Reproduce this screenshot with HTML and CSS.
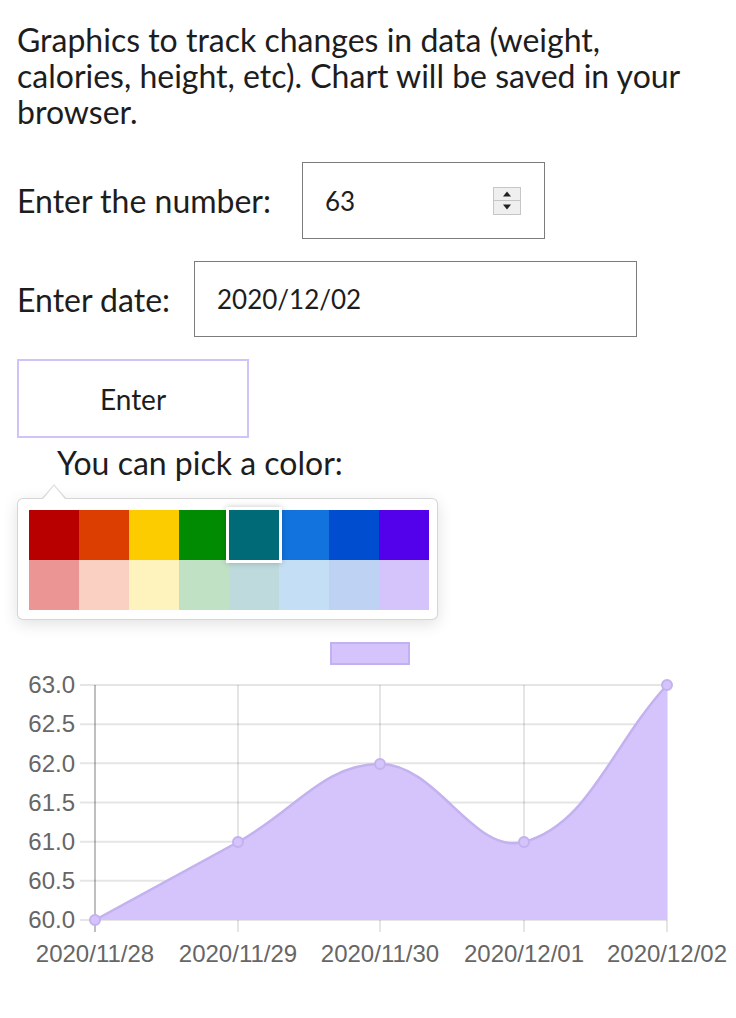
FILE: index.html
```html
<!DOCTYPE html>
<html lang="en">
<head>
<meta charset="utf-8">
<title>Tracker</title>
<link rel="stylesheet" href="styles.css">
</head>
<body>
<main class="page">
  <p class="intro">Graphics to track changes in data (weight, calories, height, etc). Chart will be saved in your browser.</p>
  <div class="field field-number">
    <label class="field-label">Enter the number:</label>
    <div class="input num-input">
      <span>63</span>
      <span class="spinner">
        <span class="spin spin-up"><svg width="10" height="6" viewBox="0 0 10 6"><path d="M1 5.5 L5 0.5 L9 5.5 Z" fill="#222"/></svg></span>
        <span class="spin spin-down"><svg width="10" height="6" viewBox="0 0 10 6"><path d="M1 0.5 L5 5.5 L9 0.5 Z" fill="#222"/></svg></span>
      </span>
    </div>
  </div>
  <div class="field field-date">
    <label class="field-label">Enter date:</label>
    <div class="input date-input">2020/12/02</div>
  </div>
  <button class="enter-btn" type="button">Enter</button>
  <p class="pick-label">You can pick a color:</p>
  <div class="picker">
    <div class="swatches">
      <span class="swatch" style="background:#b80000"></span>
      <span class="swatch" style="background:#db3e00"></span>
      <span class="swatch" style="background:#fccb00"></span>
      <span class="swatch" style="background:#008b02"></span>
      <span class="swatch active" style="background:#006b76"></span>
      <span class="swatch" style="background:#1273de"></span>
      <span class="swatch" style="background:#004dcf"></span>
      <span class="swatch" style="background:#5300eb"></span>
      <span class="swatch" style="background:#eb9694"></span>
      <span class="swatch" style="background:#fad0c3"></span>
      <span class="swatch" style="background:#fef3bd"></span>
      <span class="swatch" style="background:#c1e1c5"></span>
      <span class="swatch" style="background:#bedadc"></span>
      <span class="swatch" style="background:#c4def6"></span>
      <span class="swatch" style="background:#bed3f3"></span>
      <span class="swatch" style="background:#d4c4fb"></span>
    </div>
  </div>
</main>
<svg class="chart" width="736" height="398" viewBox="0 620 736 398">
  <rect x="331" y="643" width="78" height="21" fill="#d4c4fb" stroke="#c2b1f1" stroke-width="2"/>
  <g stroke="rgba(0,0,0,0.1)" stroke-width="2">
    <line x1="80" y1="685" x2="667" y2="685"/>
    <line x1="80" y1="724.2" x2="667" y2="724.2"/>
    <line x1="80" y1="763.3" x2="667" y2="763.3"/>
    <line x1="80" y1="802.5" x2="667" y2="802.5"/>
    <line x1="80" y1="841.7" x2="667" y2="841.7"/>
    <line x1="80" y1="880.8" x2="667" y2="880.8"/>
    <line x1="80" y1="920" x2="667" y2="920"/>
    <line x1="238" y1="685" x2="238" y2="932"/>
    <line x1="380" y1="685" x2="380" y2="932"/>
    <line x1="524" y1="685" x2="524" y2="932"/>
    <line x1="667" y1="685" x2="667" y2="932"/>
  </g>
  <line x1="95" y1="685" x2="95" y2="932" stroke="rgba(0,0,0,0.25)" stroke-width="2"/>
  <path d="M95,920 C152.2,888.8 180.8,873.3 238,842 C294.8,810.9 323.1,764 380,764 C437.5,764 474,855.8 524,842 C588.8,824.2 609.8,747.8 667,685 L667,920 Z" fill="#d4c4fb"/>
  <path d="M95,920 C152.2,888.8 180.8,873.3 238,842 C294.8,810.9 323.1,764 380,764 C437.5,764 474,855.8 524,842 C588.8,824.2 609.8,747.8 667,685" fill="none" stroke="#c3b2ef" stroke-width="2.5"/>
  <g fill="#d4c4fb" stroke="#c3b2ef" stroke-width="2">
    <circle cx="95" cy="920" r="5"/>
    <circle cx="238" cy="842" r="5"/>
    <circle cx="380" cy="764" r="5"/>
    <circle cx="524" cy="842" r="5"/>
    <circle cx="667" cy="685" r="5"/>
  </g>
  <g class="axis-text" text-anchor="end">
    <text x="75" y="693">63.0</text>
    <text x="75" y="732">62.5</text>
    <text x="75" y="772">62.0</text>
    <text x="75" y="811">61.5</text>
    <text x="75" y="850">61.0</text>
    <text x="75" y="889">60.5</text>
    <text x="75" y="928">60.0</text>
  </g>
  <g class="axis-text" text-anchor="middle">
    <text x="95" y="962">2020/11/28</text>
    <text x="238" y="962">2020/11/29</text>
    <text x="380" y="962">2020/11/30</text>
    <text x="524" y="962">2020/12/01</text>
    <text x="667" y="962">2020/12/02</text>
  </g>
</svg>
</body>
</html>
```
FILE: styles.css
```css
html, body {
  margin: 0;
  padding: 0;
  background: #fff;
}
body {
  font-family: Lato, "Noto Sans", sans-serif;
  color: #1d1d1d;
}
.page {
  padding: 22px 17px 0 17px;
}
.intro {
  margin: 0;
  font-size: 32px;
  line-height: 36px;
}
.field {
  display: flex;
  align-items: center;
}
.field-label {
  font-size: 32px;
}
.field-number {
  margin-top: 32px;
}
.field-date {
  margin-top: 22px;
}
.input {
  box-sizing: border-box;
  border: 1.5px solid #7c7c7c;
  display: flex;
  align-items: center;
  font-size: 26px;
  color: #1d1d1d;
}
.num-input {
  width: 243px;
  height: 77px;
  margin-left: 31px;
  padding: 0 23px 0 22px;
  justify-content: space-between;
}
.date-input {
  width: 443px;
  height: 76px;
  margin-left: 24px;
  padding-left: 22px;
}
.spinner {
  width: 28px;
  height: 28px;
  box-sizing: border-box;
  border: 1px solid #c6c6c6;
  background: #efefef;
  display: flex;
  flex-direction: column;
}
.spin {
  flex: 1;
  display: flex;
  align-items: center;
  justify-content: center;
}
.spin-up {
  border-bottom: 1px solid #c6c6c6;
}
.enter-btn {
  display: block;
  margin-top: 22px;
  width: 232px;
  height: 79px;
  box-sizing: border-box;
  border: 2px solid #cfc3fa;
  background: #fff;
  font-family: Lato, "Noto Sans", sans-serif;
  font-size: 28px;
  color: #1d1d1d;
  padding: 0;
}
.pick-label {
  margin: 5px 0 0 40px;
  font-size: 32px;
  line-height: 40px;
}
.picker {
  position: relative;
  margin-top: 15px;
  width: 421px;
  height: 122px;
  box-sizing: border-box;
  border: 1px solid rgba(0, 0, 0, 0.16);
  border-radius: 6px;
  box-shadow: 0 4px 16px rgba(0, 0, 0, 0.12);
  padding: 11px 10px 10px 11px;
  background: #fff;
}
.picker::before {
  content: "";
  position: absolute;
  left: 24px;
  top: -15px;
  border-left: 12px solid transparent;
  border-right: 12px solid transparent;
  border-bottom: 14px solid rgba(0, 0, 0, 0.12);
}
.picker::after {
  content: "";
  position: absolute;
  left: 25px;
  top: -13px;
  border-left: 11px solid transparent;
  border-right: 11px solid transparent;
  border-bottom: 13px solid #fff;
}
.swatches {
  display: grid;
  grid-template-columns: repeat(8, 50px);
  grid-auto-rows: 50px;
}
.swatch {
  display: block;
}
.swatch.active {
  position: relative;
  z-index: 1;
  outline: 3px solid #fff;
  box-shadow: 0 0 6px 3px rgba(0, 0, 0, 0.22);
}
.chart {
  display: block;
}
.axis-text {
  font-family: "Liberation Sans", Arial, sans-serif;
  font-size: 24px;
  fill: #666;
}
```
